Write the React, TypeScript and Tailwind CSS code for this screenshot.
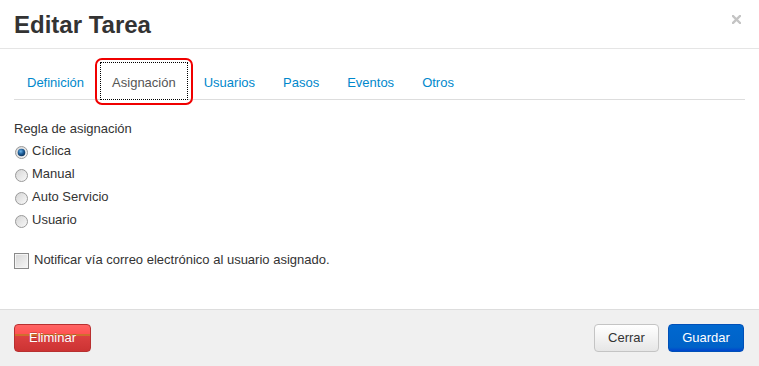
import React from "react";

const tabs = ["Definición", "Asignación", "Usuarios", "Pasos", "Eventos", "Otros"];
const options = ["Cíclica", "Manual", "Auto Servicio", "Usuario"];

function Radio({ checked }: { checked: boolean }) {
  return (
    <svg width="13" height="13" viewBox="0 0 13 13" className="mt-[7px] ml-[1px] mr-[4px] shrink-0">
      <defs>
        <linearGradient id="rg" x1="0" y1="0" x2="1" y2="1">
          <stop offset="0" stopColor="#d4d4d4" />
          <stop offset="1" stopColor="#fafafa" />
        </linearGradient>
        <radialGradient id="bd" cx="0.4" cy="0.35" r="0.7">
          <stop offset="0" stopColor="#6fb7ea" />
          <stop offset="0.5" stopColor="#1f5f9a" />
          <stop offset="1" stopColor="#0d2f55" />
        </radialGradient>
      </defs>
      <circle cx="6.5" cy="6.5" r="6" fill="url(#rg)" stroke="#9a9a9a" strokeWidth="1" />
      {checked && <circle cx="6.5" cy="6.5" r="3.8" fill="url(#bd)" />}
    </svg>
  );
}

export default function App() {
  return (
    <div className="w-[759px] h-[366px] bg-white flex flex-col text-[13px] text-[#333] font-['Liberation_Sans',Arial,sans-serif] overflow-hidden">
      {/* Header */}
      <div className="h-[49px] shrink-0 border-b border-[#e5e5e5] pl-[14px] pt-[10px] pr-[18px] flex items-start justify-between">
        <h3 className="text-[24px] font-bold leading-[30px] text-[#333]">Editar Tarea</h3>
        <svg width="9" height="9" viewBox="0 0 9 9" className="mt-[5px]">
          <path d="M1 1 L8 8 M8 1 L1 8" stroke="#c4c4c4" strokeWidth="2.4" strokeLinecap="square" />
        </svg>
      </div>

      {/* Body */}
      <div className="flex-1 px-[14px] pt-[13px]">
        <div className="flex items-start h-[38px] border-b border-[#dddddd] pl-px">
          {tabs.map((t) => {
            const active = t === "Asignación";
            return active ? (
              <div key={t} className="relative mr-1 h-[38px] z-10 bg-white">
                <div className="h-[38px] border border-dotted border-black px-[11px] pt-[10px] leading-[20px] text-[#555]">
                  {t}
                </div>
                <div className="absolute left-[-5px] right-[-5px] top-[-4px] bottom-[-5px] border-2 border-[#f00000] rounded-[7px]" />
              </div>
            ) : (
              <div key={t} className="mr-1 h-[37px] border border-transparent px-[11px] pt-[10px] leading-[20px] text-[#0088cc]">
                {t}
              </div>
            );
          })}
        </div>

        <div className="mt-[20px] leading-[18px]">Regla de asignación</div>
        <div className="mt-[1px] flex flex-col">
          {options.map((o, i) => (
            <div key={o} className="flex items-start h-[23px] leading-[23px]">
              <Radio checked={i === 0} />
              <span>{o}</span>
            </div>
          ))}
        </div>

        <div className="mt-[20px] flex items-start leading-[18px]">
          <div className="mt-[2px] mr-[5px] w-[15px] h-[16px] border border-[#8a8a8a] bg-[linear-gradient(135deg,#d6d6d6,#f7f7f7)] shadow-[inset_0_0_0_1px_#f4f4f4] shrink-0" />
          <span>Notificar vía correo electrónico al usuario asignado.</span>
        </div>
      </div>

      {/* Footer */}
      <div className="h-[57px] shrink-0 border-t border-[#dddddd] bg-[#f0f0f0] flex items-center justify-between pl-[14px] pr-[15px]">
        <button className="w-[77px] h-[28px] rounded-[4px] border border-[#b83030] text-white text-[13px] bg-[linear-gradient(to_bottom,#ff6464_0px,#ff5252_9px,#cf6e2e_9px,#cf6e2e_11px,#dc4040_11px,#cc3333_100%)] [text-shadow:0_-1px_0_rgba(0,0,0,0.2)]">
          Eliminar
        </button>
        <div className="flex items-center gap-[9px]">
          <button className="w-[65px] h-[28px] rounded-[4px] border border-[#c4c4c4] text-[#333] text-[13px] bg-[linear-gradient(to_bottom,#ffffff,#e6e6e6)]">
            Cerrar
          </button>
          <button className="w-[76px] h-[28px] rounded-[4px] border border-[#0050b8] text-white text-[13px] bg-[linear-gradient(to_bottom,#0068cf,#0062c8_85%,#0044cc)]">
            Guardar
          </button>
        </div>
      </div>
    </div>
  );
}
